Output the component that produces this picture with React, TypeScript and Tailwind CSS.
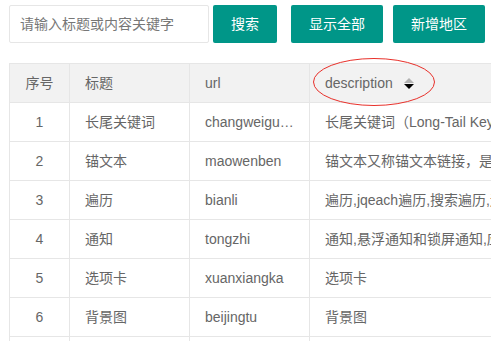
import React from 'react';

type Row = { id: number; title: string; url: string; desc: string };

const rows: Row[] = [
  { id: 1, title: '长尾关键词', url: 'changweiguanjianci', desc: '长尾关键词（Long-Tail Keyword）是指网站上的非目标关键词' },
  { id: 2, title: '锚文本', url: 'maowenben', desc: '锚文本又称锚文本链接，是链接的一种形式' },
  { id: 3, title: '遍历', url: 'bianli', desc: '遍历,jqeach遍历,搜索遍历,遍历二叉树' },
  { id: 4, title: '通知', url: 'tongzhi', desc: '通知,悬浮通知和锁屏通知,应用通知' },
  { id: 5, title: '选项卡', url: 'xuanxiangka', desc: '选项卡' },
  { id: 6, title: '背景图', url: 'beijingtu', desc: '背景图' },
  { id: 7, title: '按钮', url: 'anniu', desc: '按钮' },
];

const cell = 'border-r border-b border-[#e6e6e6] px-[15px] py-[9px] leading-5 h-[39px] whitespace-nowrap overflow-hidden';

const App: React.FC = () => {
  return (
    <div
      className="w-[491px] h-[341px] overflow-hidden bg-white text-[14px] text-[#666]"
      style={{ fontFamily: '"Liberation Sans", "Noto Sans CJK SC", sans-serif' }}
    >
      <div className="pl-[9px] pt-[5px] flex items-center">
        <input
          className="w-[200px] h-[38px] border border-[#e6e6e6] rounded-[2px] pl-[10px] text-[14px] outline-none placeholder:text-[#777]"
          placeholder="请输入标题或内容关键字"
        />
        <button className="ml-[4px] w-[64px] h-[38px] bg-[#009688] text-white rounded-[2px] text-[14px]">搜索</button>
        <button className="ml-[14px] w-[92px] h-[38px] bg-[#009688] text-white rounded-[2px] text-[14px]">显示全部</button>
        <button className="ml-[10px] w-[92px] h-[38px] bg-[#009688] text-white rounded-[2px] text-[14px]">新增地区</button>
      </div>

      {/* table */}
      <div className="relative ml-[9px] mt-[20px] w-[600px] border-l border-t border-[#e6e6e6]">
        <div className="grid grid-cols-[60px_120px_120px_300px]">
          <div className={`${cell} bg-[#f2f2f2] text-center`}>序号</div>
          <div className={`${cell} bg-[#f2f2f2]`}>标题</div>
          <div className={`${cell} bg-[#f2f2f2]`}>url</div>
          <div className={`${cell} bg-[#f2f2f2] flex items-center`}>
            <span>description</span>
            <span className="ml-[11px] flex flex-col items-center gap-[1px]">
              <span className="w-0 h-0 border-l-[5px] border-r-[5px] border-b-[5px] border-l-transparent border-r-transparent border-b-[#b2b2b2]" />
              <span className="w-0 h-0 border-l-[5px] border-r-[5px] border-t-[5px] border-l-transparent border-r-transparent border-t-[#000]" />
            </span>
          </div>
          {rows.map((r) => (
            <React.Fragment key={r.id}>
              <div className={`${cell} text-center`}>{r.id}</div>
              <div className={cell}>{r.title}</div>
              <div className={`${cell} text-ellipsis`}>{r.url}</div>
              <div className={cell}>{r.desc}</div>
            </React.Fragment>
          ))}
        </div>

        {/* red ellipse annotation */}
        <svg className="absolute left-[302px] top-[-6px]" width="124" height="50" viewBox="0 0 124 50">
          <ellipse cx="62" cy="24" rx="60.5" ry="23.5" fill="none" stroke="#e8302a" strokeWidth="1" />
        </svg>
      </div>
    </div>
  );
};

export default App;
